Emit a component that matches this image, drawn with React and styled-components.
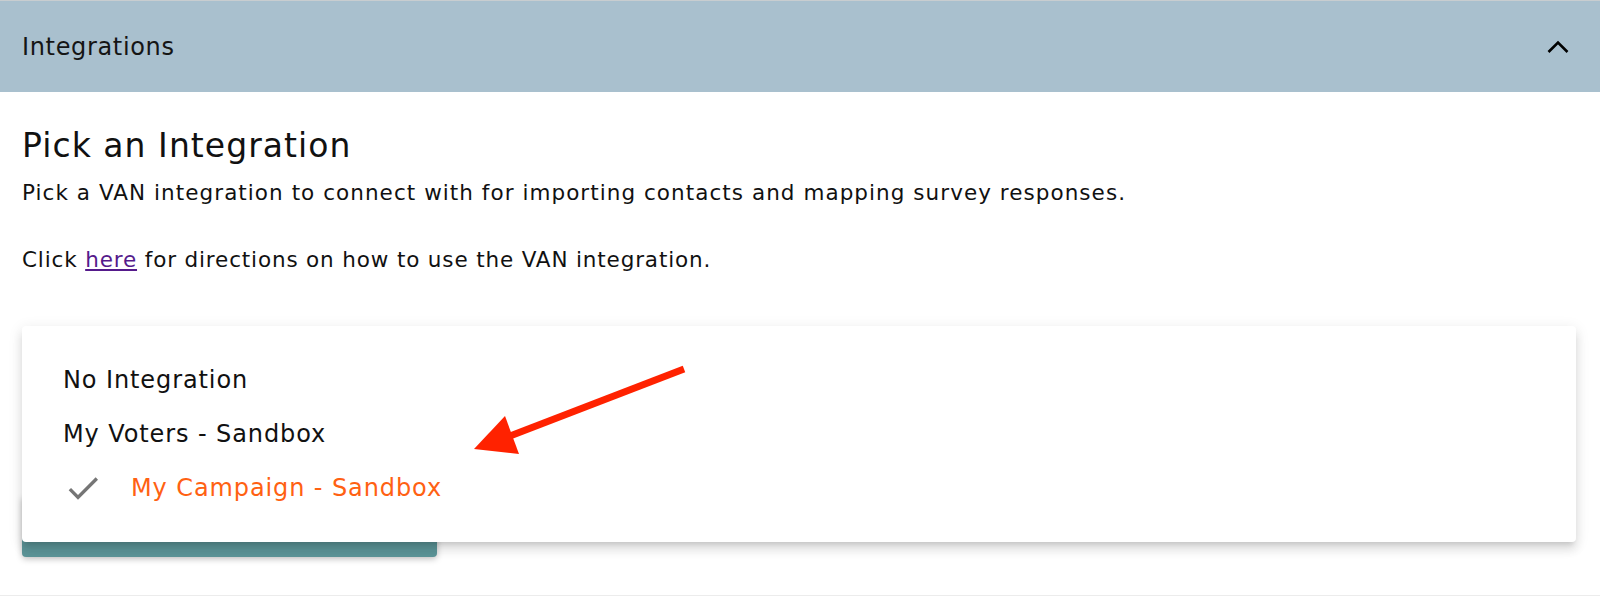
import React from 'react'
import styled, { createGlobalStyle } from 'styled-components'

const GlobalStyle = createGlobalStyle`
    html, body {
        margin: 0;
        padding: 0;
        background: #fff;
    }
    body {
        font-family: "DejaVu Sans", "Noto Sans", sans-serif;
        color: #111;
    }
`;

const Page = styled.div`
    position: relative;
    width: 1600px;
    height: 596px;
    overflow: hidden;
    border-bottom: 1px solid #ececec;
    box-sizing: border-box;
`;

const Header = styled.header`
    height: 91px;
    border-top: 1px solid #c8cdd0;
    background-color: #a9c0ce;
    display: flex;
    align-items: center;
    justify-content: space-between;
    padding: 0 30px 0 22px;
`;

const HeaderTitle = styled.span`
    font-size: 24px;
    letter-spacing: 0.65px;
    color: #151515;
`;

const Body = styled.section`
    padding: 0 22px;
`;

const Heading = styled.h2`
    margin: 34px 0 0;
    font-size: 33px;
    line-height: 40px;
    font-weight: 400;
    letter-spacing: 1.05px;
`;

const Text = styled.p`
    margin: ${p => p.$gap || 0}px 0 0;
    font-size: 21.5px;
    line-height: 28px;
    letter-spacing: ${p => p.$tracking || 1}px;

    > a {
        color: #551a8b;
    }
`;

const FormArea = styled.div`
    position: relative;
    display: flex;
    flex-direction: column;
    margin-top: 52px;
    height: 231px;
`;

const SaveButton = styled.div`
    margin-top: 171px;
    width: 415px;
    height: 60px;
    background-color: #5c9598;
    border-top: 1px solid #2f7a7d;
    border-radius: 0 0 4px 4px;
    box-shadow: 0 2px 6px rgba(0, 0, 0, 0.25);
    box-sizing: border-box;
`;

const Menu = styled.ul`
    position: absolute;
    top: 0;
    left: 0;
    right: 2px;
    margin: 0;
    padding: 27px 0;
    list-style: none;
    background: #fff;
    border-radius: 4px;
    box-shadow: 0 5px 5px -3px rgba(0,0,0,0.12), 0 8px 10px 1px rgba(0,0,0,0.08), 0 3px 14px 2px rgba(0,0,0,0.07);
    z-index: 2;
`;

const Item = styled.li`
    height: 54px;
    display: flex;
    align-items: center;
    padding-left: 41px;
    font-size: 24px;
    line-height: 54px;
    letter-spacing: 0.9px;
    color: ${p => p.$selected ? '#ff6112' : '#111'};
`;

const CheckIcon = styled.svg`
    width: 40px;
    height: 40px;
    margin-right: 28px;
    fill: #757575;
`;

const Arrow = styled.svg`
    position: absolute;
    left: 460px;
    top: 350px;
    z-index: 3;
`;

const options = [
    { label: 'No Integration' },
    { label: 'My Voters - Sandbox' },
    { label: 'My Campaign - Sandbox', selected: true },
];

export default function App() {
    return (
        <Page>
            <GlobalStyle />
            <Header>
                <HeaderTitle>Integrations</HeaderTitle>
                <svg width="24" height="16" viewBox="0 0 24 16">
                    <polyline points="2.5,13 12,3.5 21.5,13" fill="none" stroke="#000" strokeWidth="2.6" />
                </svg>
            </Header>
            <Body>
                <Heading>Pick an Integration</Heading>
                <Text $gap={13} $tracking={1.05}>Pick a VAN integration to connect with for importing contacts and mapping survey responses.</Text>
                <Text $gap={39} $tracking={0.85}>Click <a href="#">here</a> for directions on how to use the VAN integration.</Text>
                <FormArea>
                    <SaveButton />
                    <Menu>
                        {options.map((o, idx) => (
                            <Item key={idx} $selected={o.selected}>
                                {o.selected && (
                                    <CheckIcon viewBox="0 0 24 24">
                                        <path d="M9 16.17L4.83 12l-1.42 1.41L9 19 21 7l-1.41-1.41z" />
                                    </CheckIcon>
                                )}
                                {o.label}
                            </Item>
                        ))}
                    </Menu>
                </FormArea>
            </Body>
            <Arrow width="240" height="120" viewBox="0 0 240 120">
                <line x1="224" y1="19" x2="50" y2="86" stroke="#ff2200" strokeWidth="7" />
                <polygon points="14,99 45,66 59,104" fill="#ff2200" />
            </Arrow>
        </Page>
    )
}
